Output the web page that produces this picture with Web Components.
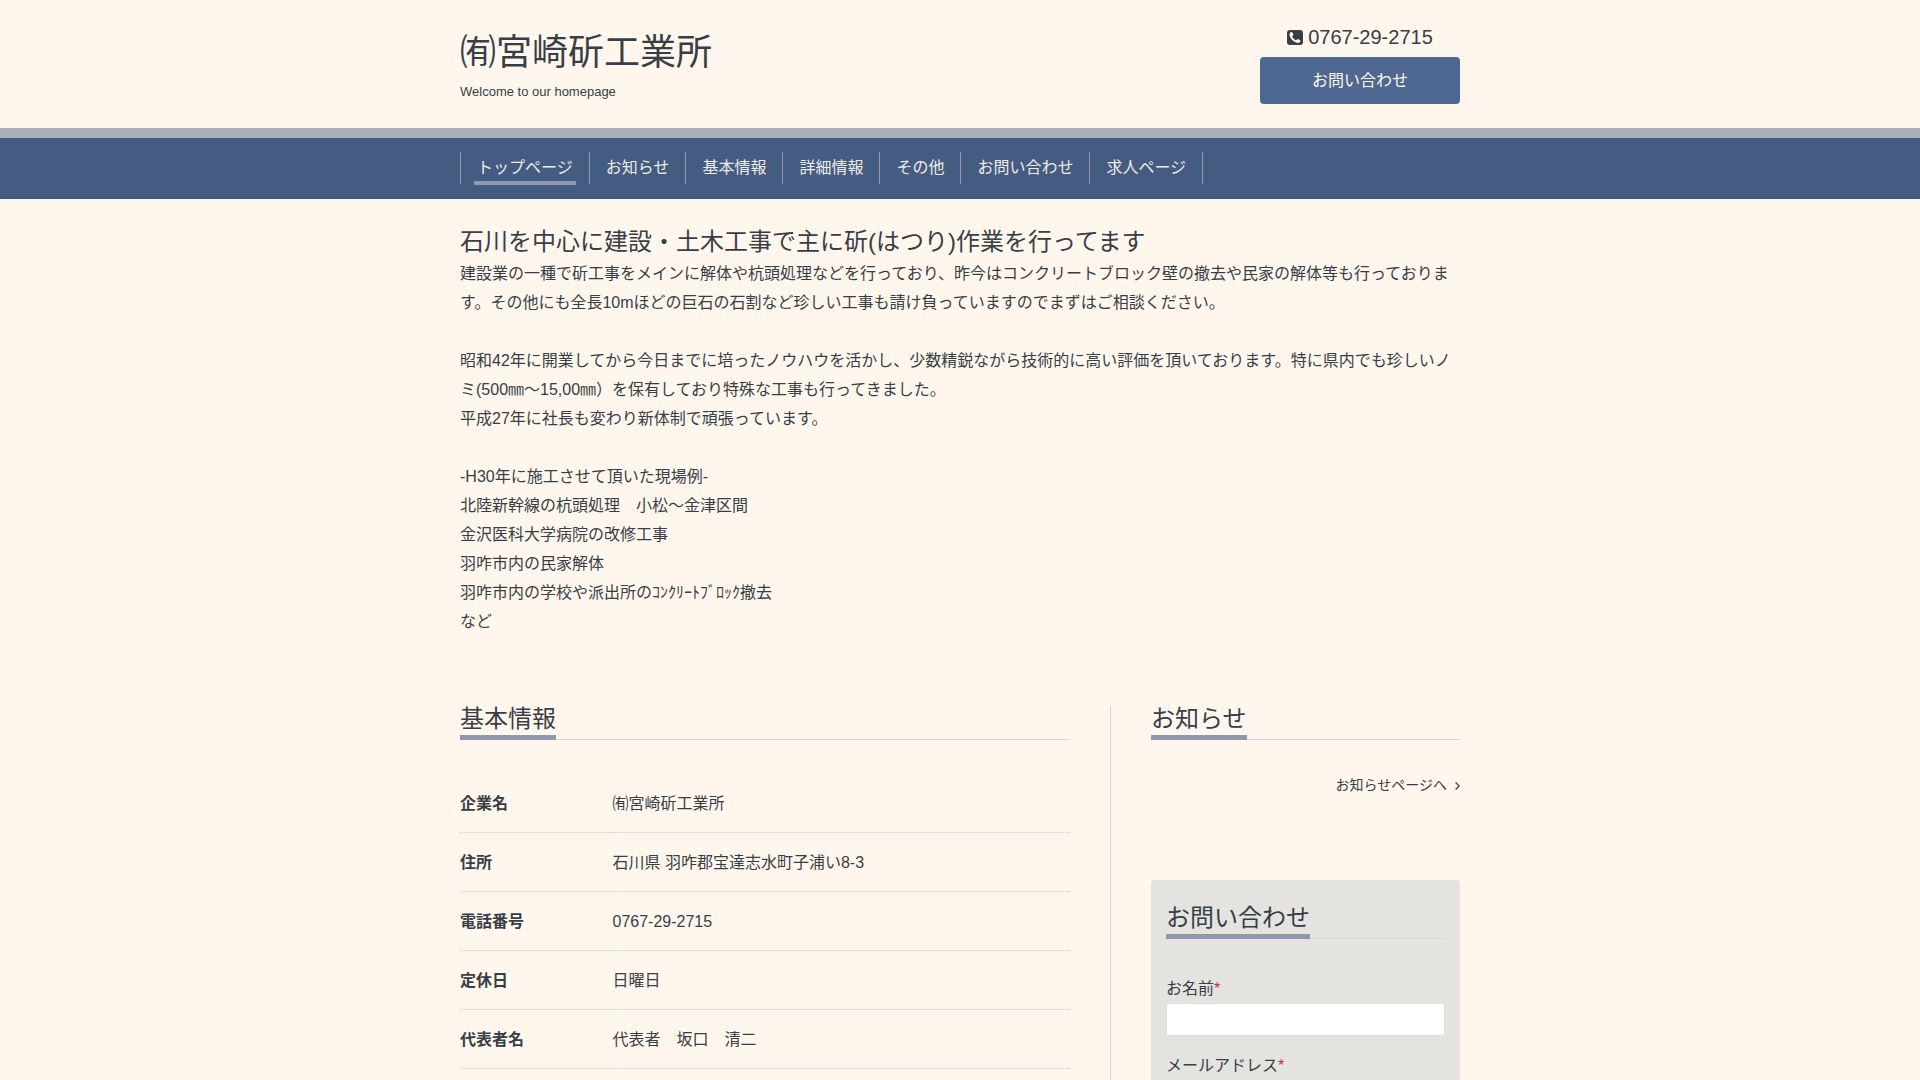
<!DOCTYPE html>
<html lang="ja">
<head>
  <meta charset="utf-8">
  <title>㈲宮崎斫工業所</title>
  <style>
    body {
      margin: 0;
      background: #fff7ed;
      color: #383e46;
      font: 16px/29px "Liberation Sans", "Noto Sans CJK JP", sans-serif;
    }
  </style>
</head>
<body>
  <site-page>
    <site-header slot="header" name="㈲宮崎斫工業所" description="Welcome to our homepage" tel="0767-29-2715"></site-header>
    <site-nav slot="nav"></site-nav>
    <site-welcome slot="welcome">
      <span slot="title">石川を中心に建設・土木工事で主に斫(はつり)作業を行ってます</span>
      建設業の一種で斫工事をメインに解体や杭頭処理などを行っており、昨今はコンクリートブロック壁の撤去や民家の解体等も行っております。その他にも全長10mほどの巨石の石割など珍しい工事も請け負っていますのでまずはご相談ください。<br>
      <br>
      昭和42年に開業してから今日までに培ったノウハウを活かし、少数精鋭ながら技術的に高い評価を頂いております。特に県内でも珍しいノミ(500㎜～15,00㎜）を保有しており特殊な工事も行ってきました。<br>
      平成27年に社長も変わり新体制で頑張っています。<br>
      <br>
      -H30年に施工させて頂いた現場例-<br>
      北陸新幹線の杭頭処理　小松～金津区間<br>
      金沢医科大学病院の改修工事<br>
      羽咋市内の民家解体<br>
      羽咋市内の学校や派出所のｺﾝｸﾘｰﾄﾌﾞﾛｯｸ撤去<br>
      など
    </site-welcome>
    <company-info></company-info>
    <news-list slot="side"></news-list>
    <contact-form slot="side"></contact-form>
  </site-page>

  <script>
    class SitePage extends HTMLElement {
      constructor() {
        super();

        const shadowRoot = this.attachShadow({ mode: 'open' });

        shadowRoot.innerHTML = `
          <style>
            :host {
              display: block;
              height: 100vh;
              overflow-y: auto;
              scrollbar-width: none;
            }
            .columns {
              display: flex;
              box-sizing: border-box;
              max-width: 1000px;
              margin: 0 auto;
              padding-top: 70px;
            }
            main {
              flex: 1;
              padding-right: 40px;
            }
            aside {
              box-sizing: border-box;
              width: 350px;
              padding-left: 40px;
              border-left: 1px solid #d5d7d7;
            }
          </style>
          <slot name="header"></slot>
          <slot name="nav"></slot>
          <slot name="welcome"></slot>
          <div class="columns">
            <main><slot></slot></main>
            <aside><slot name="side"></slot></aside>
          </div>
        `;
      }
    }

    class SiteHeader extends HTMLElement {
      constructor() {
        super();

        this.attachShadow({ mode: 'open' });
      }

      connectedCallback() {
        this.shadowRoot.innerHTML = `
          <style>
            :host {
              display: block;
              border-bottom: 10px solid #a9afbb;
            }
            header {
              display: flex;
              justify-content: space-between;
              box-sizing: border-box;
              max-width: 1000px;
              min-height: 128px;
              margin: 0 auto;
              padding-top: 24px;
            }
            h1 {
              margin: 0;
              font-size: 36px;
              font-weight: normal;
              line-height: 58px;
            }
            h1 a {
              color: inherit;
              text-decoration: none;
            }
            p {
              margin: 0;
              font-size: 13px;
              line-height: 20px;
            }
            .contact {
              width: 200px;
              text-align: center;
            }
            .tel {
              display: flex;
              align-items: center;
              justify-content: center;
              gap: 5px;
              margin-bottom: 7px;
              font-size: 20px;
              line-height: 26px;
            }
            .button {
              display: block;
              border-radius: 4px;
              background: #4e6893;
              color: #fff7ed;
              line-height: 47px;
              text-decoration: none;
            }
          </style>
          <header>
            <div>
              <h1><a href="#">${this.getAttribute('name')}</a></h1>
              <p>${this.getAttribute('description')}</p>
            </div>
            <div class="contact">
              <div class="tel">
                <svg width="16" height="16" viewBox="0 0 16 16" aria-hidden="true">
                  <rect width="16" height="15" y="1" rx="3" fill="#383e46"/>
                  <path d="M4.8 3.1c.3 0 1.6 2.3 1.6 2.7 0 .5-1.2 1.2-1.2 1.6C5.8 9 7.4 10.6 9 11.3c.5 0 1.2-1.3 1.7-1.3.4 0 2.6 1.2 2.7 1.5.2 1.2-1 2.4-2.6 2.4C6.8 13.7 2.6 9.3 2.5 5.6c0-1.5 1-2.5 2.3-2.5z" fill="#fff7ed"/>
                </svg>
                <span>${this.getAttribute('tel')}</span>
              </div>
              <a class="button" href="#contact">お問い合わせ</a>
            </div>
          </header>
        `;
      }
    }

    class SiteNav extends HTMLElement {
      constructor() {
        super();

        const shadowRoot = this.attachShadow({ mode: 'open' });
        const pages = ['トップページ', 'お知らせ', '基本情報', '詳細情報', 'その他', 'お問い合わせ', '求人ページ'];

        shadowRoot.innerHTML = `
          <style>
            :host {
              display: block;
              background: #455c82;
            }
            ul {
              display: flex;
              max-width: 1000px;
              margin: 0 auto;
              padding: 14px 0 15px;
              list-style: none;
            }
            li {
              height: 32px;
              padding: 0 13px;
              border-right: 1px solid #8f9bad;
            }
            li:first-child {
              border-left: 1px solid #8f9bad;
            }
            a {
              display: block;
              padding: 2px 3px 0;
              color: #eeebe6;
              line-height: 27px;
              text-decoration: none;
            }
            a[aria-current] {
              border-bottom: 4px solid #8f9bad;
            }
          </style>
          <nav>
            <ul>
              ${pages.map((page, i) => `<li><a href="#"${i === 0 ? ' aria-current="page"' : ''}>${page}</a></li>`).join('')}
            </ul>
          </nav>
        `;
      }
    }

    class SiteWelcome extends HTMLElement {
      constructor() {
        super();

        const shadowRoot = this.attachShadow({ mode: 'open' });

        shadowRoot.innerHTML = `
          <style>
            :host {
              display: block;
              max-width: 1000px;
              margin: 0 auto;
              padding-top: 25px;
            }
            h2 {
              margin: 0;
              font-size: 24px;
              font-weight: normal;
              line-height: 35px;
            }
          </style>
          <h2><slot name="title"></slot></h2>
          <div><slot></slot></div>
        `;
      }
    }

    class SectionTitle extends HTMLElement {
      constructor() {
        super();

        const shadowRoot = this.attachShadow({ mode: 'open' });

        shadowRoot.innerHTML = `
          <style>
            :host {
              display: block;
            }
            h2 {
              display: flex;
              margin: 0;
              box-shadow: inset 0 -1px #d5d7d7;
              font-size: 24px;
              font-weight: normal;
              line-height: 26px;
            }
            span {
              padding-bottom: 3px;
              border-bottom: 5px solid #8e99ae;
            }
          </style>
          <h2><span><slot></slot></span></h2>
        `;
      }
    }

    class CompanyInfo extends HTMLElement {
      constructor() {
        super();

        const shadowRoot = this.attachShadow({ mode: 'open' });
        const rows = [
          ['企業名', '㈲宮崎斫工業所'],
          ['住所', '石川県 羽咋郡宝達志水町子浦い8-3'],
          ['電話番号', '0767-29-2715'],
          ['定休日', '日曜日'],
          ['代表者名', '代表者　坂口　清二'],
        ];

        shadowRoot.innerHTML = `
          <style>
            :host {
              display: block;
            }
            table {
              width: 100%;
              margin-top: 34px;
              border-collapse: collapse;
            }
            th,
            td {
              padding: 15px 0 14px;
              border-bottom: 1px dotted #c9cbcc;
              text-align: left;
            }
            th {
              width: 25%;
            }
          </style>
          <section-title>基本情報</section-title>
          <table>
            ${rows.map(([name, value]) => `<tr><th scope="row">${name}</th><td>${value}</td></tr>`).join('')}
          </table>
        `;
      }
    }

    class NewsList extends HTMLElement {
      constructor() {
        super();

        const shadowRoot = this.attachShadow({ mode: 'open' });

        shadowRoot.innerHTML = `
          <style>
            :host {
              display: block;
              margin-bottom: 82px;
            }
            a {
              display: flex;
              align-items: center;
              justify-content: flex-end;
              gap: 8px;
              margin-top: 33px;
              color: inherit;
              font-size: 14px;
              line-height: 25px;
              text-decoration: none;
            }
          </style>
          <section-title>お知らせ</section-title>
          <a href="#">お知らせページへ
            <svg width="5" height="8" viewBox="0 0 5 8" aria-hidden="true">
              <path d="M.6.5 4.2 4 .6 7.5" fill="none" stroke="#383e46" stroke-width="1.2"/>
            </svg>
          </a>
        `;
      }
    }

    class ContactForm extends HTMLElement {
      constructor() {
        super();

        const shadowRoot = this.attachShadow({ mode: 'open' });

        shadowRoot.innerHTML = `
          <style>
            :host {
              display: block;
              padding: 25px 15px 40px;
              border-radius: 4px;
              background: #e4e3df;
            }
            form {
              margin-top: 35px;
            }
            label {
              display: block;
            }
            label span {
              color: #b03a3a;
            }
            input {
              display: block;
              box-sizing: border-box;
              width: 100%;
              height: 33px;
              margin-bottom: 15px;
              padding: 5px;
              border: 1px solid #dfdfdc;
              border-radius: 2px;
              background: #fff;
              font: inherit;
            }
          </style>
          <section-title>お問い合わせ</section-title>
          <form>
            <label for="name">お名前<span>*</span></label>
            <input id="name" type="text" required>
            <label for="email">メールアドレス<span>*</span></label>
            <input id="email" type="email" required>
          </form>
        `;
      }
    }

    window.customElements.define('section-title', SectionTitle);
    window.customElements.define('site-page', SitePage);
    window.customElements.define('site-header', SiteHeader);
    window.customElements.define('site-nav', SiteNav);
    window.customElements.define('site-welcome', SiteWelcome);
    window.customElements.define('company-info', CompanyInfo);
    window.customElements.define('news-list', NewsList);
    window.customElements.define('contact-form', ContactForm);
  </script>
</body>
</html>
